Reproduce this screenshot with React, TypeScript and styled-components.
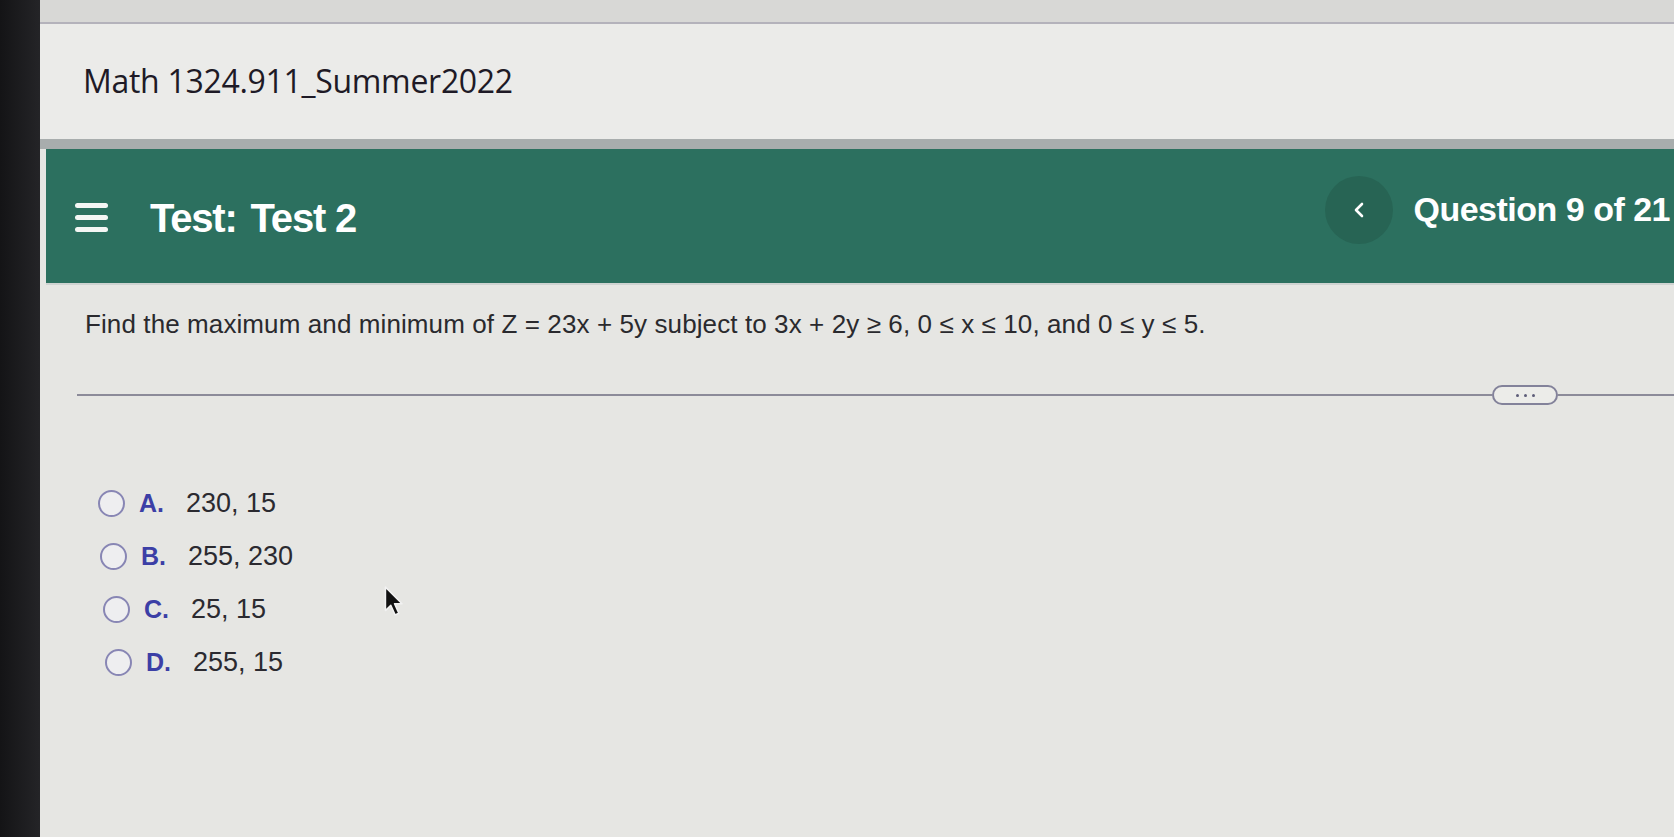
import { ReactElement } from 'react';
import styled, { createGlobalStyle } from 'styled-components';

const GlobalStyle = createGlobalStyle`
  html, body {
    margin: 0;
    padding: 0;
    background: #1b1b1d;
    overflow: hidden;
  }
  body {
    font-family: 'Liberation Sans', Arial, sans-serif;
  }
`;

const Page = styled.div`
  display: flex;
  width: 1674px;
  height: 837px;
`;
const Bezel = styled.div`
  width: 40px;
  flex-shrink: 0;
  background: linear-gradient(90deg, #141416 0%, #242427 100%);
`;
const Screen = styled.div`
  flex: 1;
  display: flex;
  flex-direction: column;
  position: relative;
  background: #e6e6e3;
`;
const TopStrip = styled.div`
  height: 22px;
  background: #d8d8d6;
  border-bottom: 2px solid #b4b2bb;
`;
const Header = styled.div`
  height: 115px;
  display: flex;
  align-items: center;
  padding: 0 0 3px 43px;
  box-sizing: border-box;
  background: #ebebe9;
`;
const CourseTitle = styled.h1`
  margin: 0;
  font-family: 'Open Sans', 'Noto Sans', sans-serif;
  font-weight: 400;
  font-size: 32px;
  letter-spacing: -0.3px;
  color: #1e1a26;
`;
const GrayBand = styled.div`
  height: 10px;
  background: #a8adad;
`;
const GreenBar = styled.div`
  height: 134px;
  margin-left: 6px;
  display: flex;
  align-items: center;
  padding-left: 29px;
  background: #2c705f;
  color: #fff;
  border-bottom: 2px solid #cfd3d1;
`;
const MenuButton = styled.div`
  width: 33px;
  display: flex;
  flex-direction: column;
  gap: 7px;
  margin-right: 42px;
  margin-top: 2px;
`;
const MenuLine = styled.span`
  height: 5px;
  border-radius: 3px;
  background: #f4f6f4;
`;
const TestTitle = styled.div`
  font-size: 40px;
  font-weight: 700;
  letter-spacing: -1.2px;
  margin-top: 4px;
  display: flex;
  gap: 14px;
`;
const Spacer = styled.div`
  flex: 1;
`;
const BackButton = styled.div`
  width: 68px;
  height: 68px;
  border-radius: 50%;
  background: #276454;
  display: flex;
  align-items: center;
  justify-content: center;
  margin: 0 21px 12px 0;
`;
const QuestionCount = styled.div`
  font-size: 34px;
  font-weight: 700;
  letter-spacing: -0.5px;
  white-space: nowrap;
  margin: 0 4px 14px 0;
`;
const Content = styled.div`
  flex: 1;
  padding: 24px 0 0 45px;
  display: flex;
  flex-direction: column;
`;
const QuestionText = styled.p`
  margin: 0;
  font-size: 26px;
  line-height: 30px;
  color: #2a2a2e;
  letter-spacing: 0.1px;
`;
const DividerRow = styled.div`
  display: flex;
  align-items: center;
  margin: 46px 0 0 -8px;
`;
const DividerLine = styled.div<{ $grow?: boolean }>`
  height: 2px;
  background: #8c8b99;
  flex: ${(p) => (p.$grow ? 1 : '0 0 116px')};
`;
const MorePill = styled.div`
  width: 62px;
  height: 16px;
  border: 2px solid #83829a;
  border-radius: 10px;
  display: flex;
  align-items: center;
  justify-content: center;
  gap: 5px;
  background: #ecece9;
`;
const Dot = styled.span`
  width: 3px;
  height: 3px;
  border-radius: 50%;
  background: #5e5d78;
`;
const Options = styled.div`
  margin: 83px 0 0 13px;
  display: flex;
  flex-direction: column;
  gap: 23px;
`;
const OptionRow = styled.label<{ $shift: number }>`
  display: flex;
  align-items: center;
  height: 30px;
  padding-left: ${(p) => p.$shift}px;
`;
const Radio = styled.span`
  width: 23px;
  height: 23px;
  border-radius: 50%;
  border: 2px solid #8886b4;
  background: #eeeef0;
  margin-right: 14px;
`;
const Letter = styled.span`
  width: 47px;
  font-size: 25px;
  font-weight: 700;
  color: #3c3fa6;
`;
const Value = styled.span`
  font-size: 27px;
  color: #2b2a30;
`;
const Cursor = styled.svg`
  position: absolute;
  left: 343px;
  top: 585px;
`;

const options = [
  { letter: 'A.', value: '230, 15' },
  { letter: 'B.', value: '255, 230' },
  { letter: 'C.', value: '25, 15' },
  { letter: 'D.', value: '255, 15' },
];

function App(): ReactElement {
  return (
    <Page>
      <GlobalStyle />
      <Bezel />
      <Screen>
        <TopStrip />
        <Header>
          <CourseTitle>Math 1324.911_Summer2022</CourseTitle>
        </Header>
        <GrayBand />
        <GreenBar>
          <MenuButton>
            <MenuLine />
            <MenuLine />
            <MenuLine />
          </MenuButton>
          <TestTitle>
            <span>Test:</span>
            <span>Test 2</span>
          </TestTitle>
          <Spacer />
          <BackButton>
            <svg width="14" height="18" viewBox="0 0 14 18">
              <path d="M10 3 L4 9 L10 15" fill="none" stroke="#fff" strokeWidth="2.6" strokeLinecap="round" strokeLinejoin="round" />
            </svg>
          </BackButton>
          <QuestionCount>Question 9 of 21</QuestionCount>
        </GreenBar>
        <Content>
          <QuestionText>
            Find the maximum and minimum of Z = 23x + 5y subject to 3x + 2y ≥ 6, 0 ≤ x ≤ 10, and 0 ≤ y ≤ 5.
          </QuestionText>
          <DividerRow>
            <DividerLine $grow />
            <MorePill>
              <Dot />
              <Dot />
              <Dot />
            </MorePill>
            <DividerLine />
          </DividerRow>
          <Options>
            {options.map((o, i) => (
              <OptionRow key={o.letter} $shift={Math.round(i * 2.4)}>
                <Radio />
                <Letter>{o.letter}</Letter>
                <Value>{o.value}</Value>
              </OptionRow>
            ))}
          </Options>
        </Content>
        <Cursor width="22" height="32" viewBox="0 0 20 30">
          <path d="M2 2 L2 24 L7 19 L11 28 L14.5 26.5 L10.5 17.5 L17.5 17.5 Z" fill="#111" stroke="#f2f2f2" strokeWidth="1.4" strokeLinejoin="round" />
        </Cursor>
      </Screen>
    </Page>
  );
}

export default App;
